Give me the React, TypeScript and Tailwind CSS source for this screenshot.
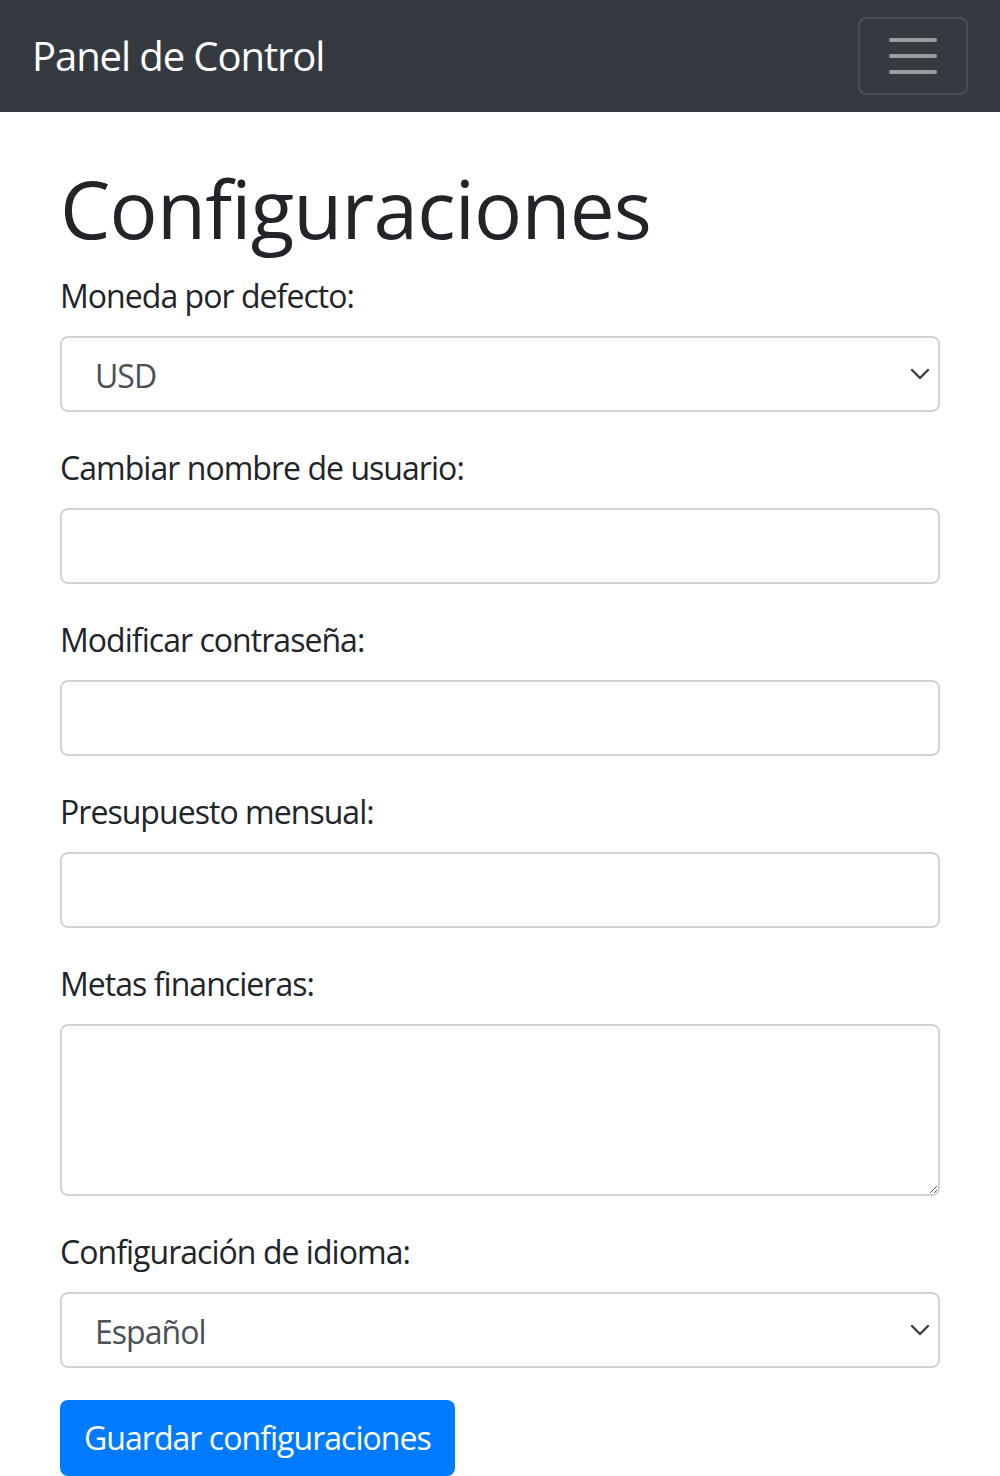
import { useState } from "react";

const font = "font-['Open_Sans','Noto_Sans',sans-serif]";

function Chevron() {
  return (
    <svg
      className="pointer-events-none absolute right-[10px] top-1/2 -translate-y-1/2"
      width="20"
      height="12"
      viewBox="0 0 20 12"
      fill="none"
    >
      <path
        d="M2 2l8 8 8-8"
        stroke="#3c4043"
        strokeWidth="2.4"
        strokeLinecap="round"
        strokeLinejoin="round"
      />
    </svg>
  );
}

function Field({ label, children }: { label: string; children: React.ReactNode }) {
  return (
    <div className="mb-[32px]">
      <label className="mb-[16px] block text-[32px] leading-[48px] tracking-[-0.03em] text-[#212529]">
        {label}
      </label>
      {children}
    </div>
  );
}

const inputClass =
  "block h-[76px] w-full rounded-[8px] border-2 border-[#ced4da] bg-white px-[24px] py-[12px] text-[32px] leading-[48px] tracking-[-0.03em] text-[#495057] outline-none";

export default function App() {
  const [currency, setCurrency] = useState("USD");
  const [lang, setLang] = useState("es");

  return (
    <div className={`${font} min-h-screen bg-white`}>
      <nav className="flex h-[112px] items-center justify-between bg-[#343a40] px-[32px]">
        <a href="#" className="text-[40px] leading-[60px] tracking-[-0.027em] text-white">
          Panel de Control
        </a>
        <button className="flex h-[78px] w-[110px] items-center justify-center rounded-[8px] border-2 border-white/10">
          <svg width="60" height="60" viewBox="0 0 30 30">
            <path
              d="M4 7h22M4 15h22M4 23h22"
              stroke="rgba(255,255,255,0.5)"
              strokeWidth="2"
              strokeLinecap="round"
            />
          </svg>
        </button>
      </nav>

      <main className="px-[60px] pt-[48px]">
        <h1 className="mb-[16px] text-[80px] font-medium leading-[96px] tracking-[-0.01em] text-[#212529]">
          Configuraciones
        </h1>

        <form onSubmit={(e) => e.preventDefault()}>
          <Field label="Moneda por defecto:">
            <div className="relative">
              <select
                value={currency}
                onChange={(e) => setCurrency(e.target.value)}
                className={`${inputClass} appearance-none pl-[33px] pt-[14px]`}
              >
                <option>USD</option>
                <option>EUR</option>
                <option>MXN</option>
              </select>
              <Chevron />
            </div>
          </Field>

          <Field label="Cambiar nombre de usuario:">
            <input type="text" className={inputClass} />
          </Field>

          <Field label="Modificar contraseña:">
            <input type="password" className={inputClass} />
          </Field>

          <Field label="Presupuesto mensual:">
            <input type="number" className={inputClass} />
          </Field>

          <Field label="Metas financieras:">
            <textarea
              rows={3}
              className="block h-[172px] w-full rounded-[8px] border-2 border-[#ced4da] bg-white px-[24px] py-[12px] text-[32px] leading-[48px] text-[#495057] outline-none"
            />
          </Field>

          <Field label="Configuración de idioma:">
            <div className="relative">
              <select
                value={lang}
                onChange={(e) => setLang(e.target.value)}
                className={`${inputClass} appearance-none pl-[33px] pt-[14px]`}
              >
                <option value="es">Español</option>
                <option value="en">English</option>
              </select>
              <Chevron />
            </div>
          </Field>

          <button
            type="submit"
            className="h-[76px] rounded-[8px] bg-[#007bff] px-[24px] text-[32px] leading-[48px] tracking-[-0.03em] text-white"
          >
            Guardar configuraciones
          </button>
        </form>
      </main>
    </div>
  );
}
